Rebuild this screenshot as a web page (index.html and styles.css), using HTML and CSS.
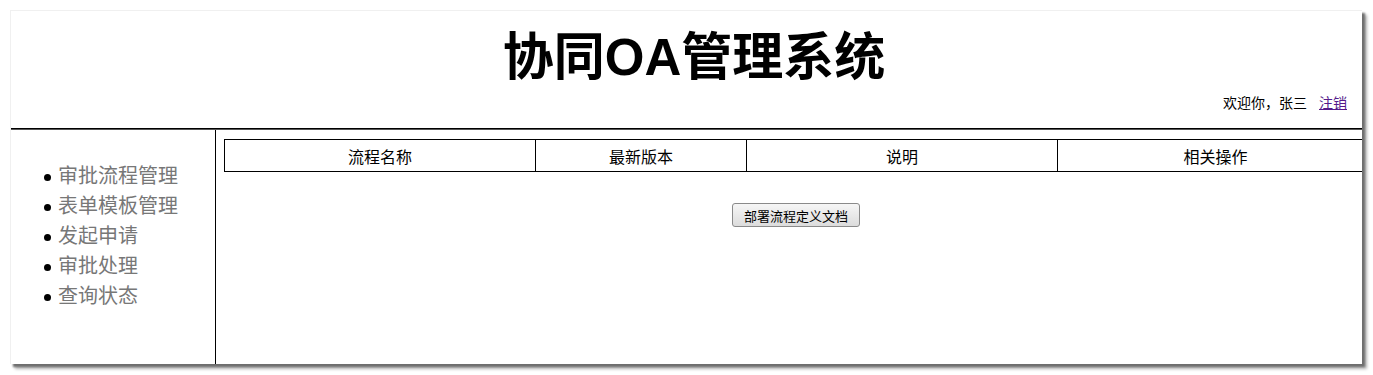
FILE: index.html
```html
<!DOCTYPE html>
<html lang="zh-CN">

<head>
  <meta charset="UTF-8" />
  <title>协同OA管理系统</title>
  <link rel="stylesheet" href="styles.css">
</head>

<body>
  <div class="frame">
    <div class="header">
      <h1>协同OA管理系统</h1>
      <div class="welcome">欢迎你，张三 <a href="#">注销</a></div>
    </div>

    <div class="main">
      <div class="sidebar">
        <ul class="menu">
          <li>审批流程管理</li>
          <li>表单模板管理</li>
          <li>发起申请</li>
          <li>审批处理</li>
          <li>查询状态</li>
        </ul>
      </div>

      <div class="content">
        <table class="flow-table">
          <tr>
            <th class="col-name">流程名称</th>
            <th class="col-ver">最新版本</th>
            <th class="col-desc">说明</th>
            <th class="col-ops">相关操作</th>
          </tr>
        </table>
        <div class="actions">
          <button>部署流程定义文档</button>
        </div>
      </div>
    </div>
  </div>
</body>

</html>
```

FILE: styles.css
```css
* {
  box-sizing: border-box;
}

body {
  margin: 0;
  padding: 10px;
  background: #fff;
  font-family: "Liberation Sans", "Noto Sans CJK SC", sans-serif;
  color: #000;
}

.frame {
  width: 1352px;
  height: 354px;
  overflow: hidden;
  background: #fff;
  border-top: 1px solid #f0f0f0;
  border-left: 1px solid #f0f0f0;
  box-shadow: 3px 3px 2px #6e6e6e, 5px 5px 3px #b8b8b8;
}

.header {
  width: 1366px;
  height: 118px;
  padding-top: 17px;
  border-bottom: 1px solid #000;
}

.header h1 {
  margin: 0;
  text-align: center;
  font-size: 51px;
  line-height: 60px;
  font-weight: bold;
}

.welcome {
  margin-top: 5px;
  padding-right: 30px;
  text-align: right;
  font-size: 14px;
  line-height: 20px;
}

.welcome a {
  margin-left: 8px;
  color: #551a8b;
}

.main {
  display: flex;
  height: 235px;
  border-top: 1px solid #555;
}

.sidebar {
  width: 205px;
  flex-shrink: 0;
  border-right: 1px solid #000;
}

.menu {
  margin: 31px 0 0;
  padding-left: 33px;
  list-style: none;
  font-size: 20px;
  line-height: 30px;
  color: #777;
}

.menu li::before {
  content: "";
  display: inline-block;
  width: 7px;
  height: 7px;
  margin-right: 7px;
  border-radius: 50%;
  background: #000;
  vertical-align: middle;
}

.content {
  padding: 9px 0 0 8px;
  width: 1160px;
  flex-shrink: 0;
}

.flow-table {
  border-collapse: collapse;
  table-layout: fixed;
  width: 1150px;
}

.flow-table th {
  height: 32px;
  border: 1px solid #000;
  font-size: 16px;
  font-weight: normal;
}

.col-name {
  width: 311px;
}

.col-ver {
  width: 211px;
}

.col-desc {
  width: 311px;
}

.actions {
  padding: 31px 0 0 508px;
}

.actions button {
  width: 128px;
  height: 24px;
  padding: 0;
  font-family: inherit;
  font-size: 13px;
  color: #000;
  border: 1px solid #8a8a8a;
  border-radius: 3px;
  background: linear-gradient(to bottom, #f6f6f6, #dcdcdc);
}
```
